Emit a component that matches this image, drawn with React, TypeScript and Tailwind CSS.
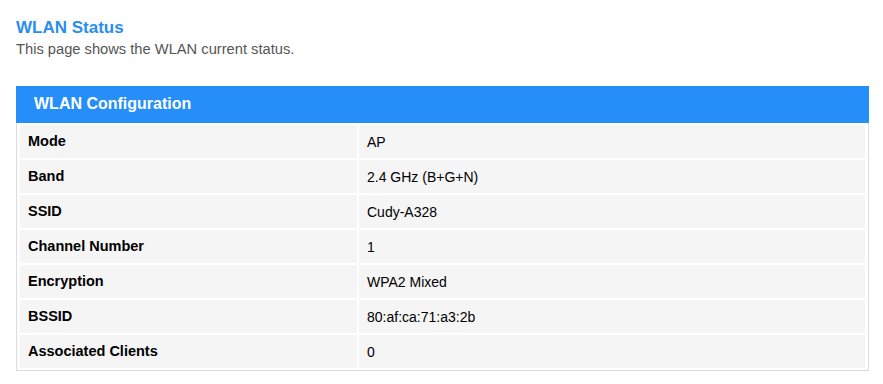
export default function App() {
  const rows: [string, string][] = [
    ["Mode", "AP"],
    ["Band", "2.4 GHz (B+G+N)"],
    ["SSID", "Cudy-A328"],
    ["Channel Number", "1"],
    ["Encryption", "WPA2 Mixed"],
    ["BSSID", "80:af:ca:71:a3:2b"],
    ["Associated Clients", "0"],
  ];
  return (
    <div className="w-[883px] h-[384px] bg-white px-4 pt-[17px]" style={{ fontFamily: '"Liberation Sans", Arial, sans-serif' }}>
      <div className="text-[17px] leading-[21px] font-bold text-[#2a8ef0]">WLAN Status</div>
      <div className="text-[14.7px] leading-[20px] text-[#555] mt-[1px]">This page shows the WLAN current status.</div>
      <div className="mt-[27px] w-[853px]">
        <div className="h-[37px] bg-[#268ef9] flex items-center pl-[18px] pb-[1px] text-white font-bold text-[16px]">WLAN Configuration</div>
        <div className="border border-t-0 border-[#dddddd] px-[3px] pt-[2px] pb-[2px]">
          <div className="grid grid-cols-[337px_1fr] gap-[2px]">
            {rows.map(([k, v]) => (
              <>
                <div key={k + "k"} className="h-[33px] bg-[#f5f5f5] flex items-center pl-2 pt-[1px] text-[14.5px] font-bold text-black">{k}</div>
                <div key={k + "v"} className="h-[33px] bg-[#f5f5f5] flex items-center pl-2 pt-[1px] text-[14px] text-black">{v}</div>
              </>
            ))}
          </div>
        </div>
      </div>
    </div>
  );
}
